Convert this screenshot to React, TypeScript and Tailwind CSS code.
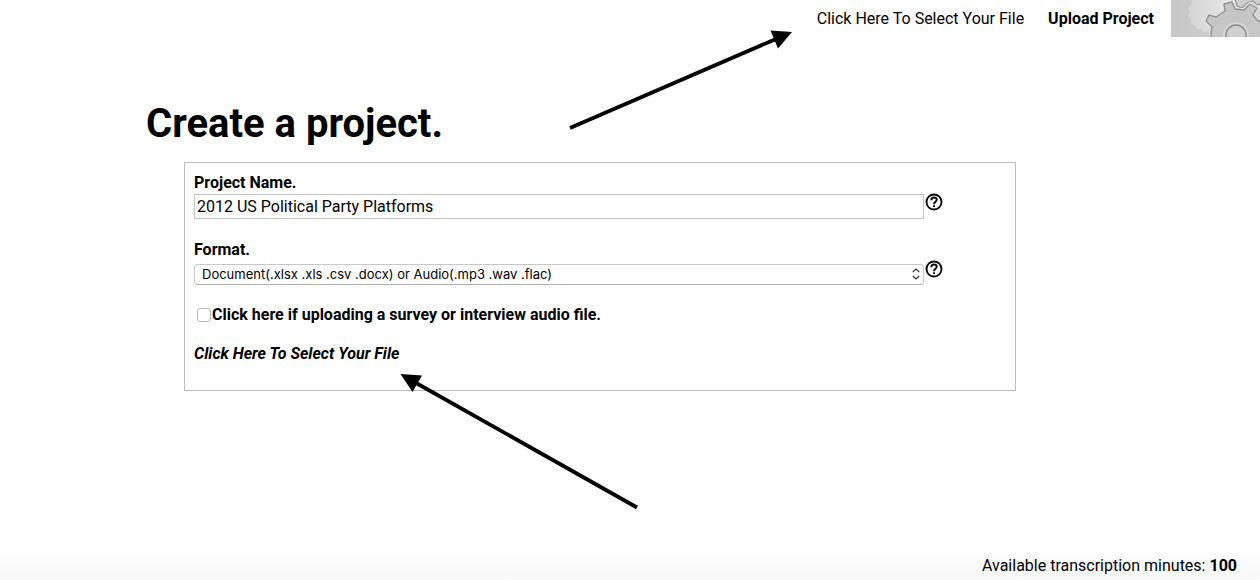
import { useState } from "react";
import type { ReactNode } from "react";

function HelpIcon() {
  return (
    <svg viewBox="0 0 18 18" className="size-[18px]" fill="none" stroke="#0a0a0a" aria-hidden="true">
      <circle cx="9" cy="9" r="7.5" strokeWidth="1.9" />
      <path d="M6.300 7.200C6.300 5.400 7.400 4.500 9 4.500S11.700 5.400 11.700 6.800C11.700 8.700 9 8.800 9 11.200" strokeWidth="1.9" />
      <path d="M9 12.200v1.900" strokeWidth="1.9" />
    </svg>
  );
}

function HelpButton({ label }: { label: string }) {
  return (
    <button type="button" aria-label={label} className="-mt-px shrink-0">
      <HelpIcon />
    </button>
  );
}

function Field({ id, label, children }: { id: string; label: string; children: ReactNode }) {
  return (
    <div>
      <label htmlFor={id} className="block leading-[23px] font-bold">
        {label}
      </label>
      <div className="flex items-start gap-px">{children}</div>
    </div>
  );
}

const FRONT_GEAR =
  "M40 38L40 32L41 27L35 21L38 15L45 17L54 11L53 4L61 2L64 9L73 10L79 4L86 8L82 15L87 21L93 20V38Z";

function GearBanner() {
  return (
    <svg viewBox="0 0 89 37" className="h-[37px] w-[89px] shrink-0" aria-hidden="true">
      <defs>
        <linearGradient id="panel" x1="0" x2="1">
          <stop offset="0" stopColor="#c8c8c8" />
          <stop offset="1" stopColor="#d2d2d2" />
        </linearGradient>
        <linearGradient id="glow" x1="0" x2="1">
          <stop offset="0" stopColor="#d6d6d6" />
          <stop offset="0.5" stopColor="#e4e4e4" />
          <stop offset="1" stopColor="#d4d4d4" />
        </linearGradient>
      </defs>
      <rect width="89" height="37" fill="url(#panel)" />
      <path
        d="M21 0L20 5L17 8L19 12L17 16L20 20L20 24L24 25L26 29L30 29L34 32L38 31L89 31V0Z"
        fill="url(#glow)"
      />
      <path
        d="M64 -1L66 6L71 8L76 3L82 1L85 4L91 5V-1Z"
        fill="#cecece"
        stroke="#969696"
        strokeWidth="1.2"
      />
      <path d={FRONT_GEAR} fill="none" stroke="#e6e6e6" strokeWidth="3.5" />
      <path
        d={FRONT_GEAR}
        fill="#c6c6c6"
        stroke="#909090"
        strokeWidth="1.4"
        strokeLinejoin="round"
      />
      <circle cx="65" cy="35" r="12" fill="none" stroke="#d6d6d6" strokeWidth="2" />
      <circle cx="65" cy="35" r="10" fill="#d0d0d0" stroke="#8c8c8c" strokeWidth="1.4" />
    </svg>
  );
}

function Arrows() {
  return (
    <svg
      viewBox="0 0 1260 580"
      className="pointer-events-none absolute top-0 left-0 h-[580px] w-[1260px]"
      stroke="#000"
      strokeWidth="3.8"
      aria-hidden="true"
    >
      <path d="M570 128L776 39" />
      <path d="M770.5 30.5L792 32L778 48.5Z" stroke="none" />
      <path d="M637 507.500L417 383.500" />
      <path d="M400.500 374L422 375.500L412.500 392Z" stroke="none" />
    </svg>
  );
}

export default function App() {
  const [name, setName] = useState("2012 US Political Party Platforms");
  const [survey, setSurvey] = useState(false);

  return (
    <div className="relative flex min-h-screen flex-col overflow-hidden bg-white font-[Roboto,sans-serif] text-base text-black">
      <header className="flex items-start justify-end">
        <nav className="flex gap-6 pt-[7px] pr-[17px] leading-6">
          <a href="#select-file">Click Here To Select Your File</a>
          <a href="#upload" className="font-bold">
            Upload Project
          </a>
        </nav>
        <GearBanner />
      </header>

      <main className="grow pr-[244px] pl-[146px]">
        <h1 className="mt-[63px] text-[40px] leading-[48px] font-bold">Create a project.</h1>
        <form
          className="mt-3.5 ml-[38px] border border-[#bdbdbd] px-[9px] pt-2 pb-6"
          onSubmit={(event) => event.preventDefault()}
        >
          <Field id="project-name" label="Project Name.">
            <input
              id="project-name"
              type="text"
              value={name}
              onChange={(event) => setName(event.target.value)}
              className="h-[25px] w-[730px] border border-[#c4c4c4] px-0.5"
            />
            <HelpButton label="Help with project name" />
          </Field>

          <div className="mt-[19px]">
            <Field id="format" label="Format.">
              <div className="relative mt-[3px] flex w-[730px]">
                <select
                  id="format"
                  className="h-[21px] w-full appearance-none rounded border border-[#c8c8c8] border-b-[#b0b0b0] bg-white px-[7px] pb-0.5 font-[Inter,sans-serif] text-[13px] leading-[18px]"
                >
                  <option>Document(.xlsx .xls .csv .docx) or Audio(.mp3 .wav .flac)</option>
                </select>
                <svg
                  viewBox="0 0 8 12"
                  className="pointer-events-none absolute top-1 right-1 h-3 w-2"
                  fill="none"
                  stroke="#333"
                  strokeWidth="1.2"
                  aria-hidden="true"
                >
                  <path d="M0.800 4L4 1L7.200 4M0.800 8L4 11L7.200 8" />
                </svg>
              </div>
              <HelpButton label="Help with format" />
            </Field>
          </div>

          <label className="mt-[18px] flex items-center pl-[3px] leading-6 font-bold">
            <input
              type="checkbox"
              checked={survey}
              onChange={(event) => setSurvey(event.target.checked)}
              className="mr-px size-3.5 appearance-none rounded-[3px] border border-[#b8b8b8] bg-white checked:bg-blue-500"
            />
            Click here if uploading a survey or interview audio file.
          </label>

          <a href="#select-file" className="mt-[15px] block w-fit leading-6 font-bold italic">
            Click Here To Select Your File
          </a>
        </form>
      </main>

      <footer className="bg-linear-to-b from-white to-[#f8f8f8] pt-1 pr-[23px] pb-0.5 text-right leading-6">
        Available transcription minutes: <strong>100</strong>
      </footer>

      <Arrows />
    </div>
  );
}
